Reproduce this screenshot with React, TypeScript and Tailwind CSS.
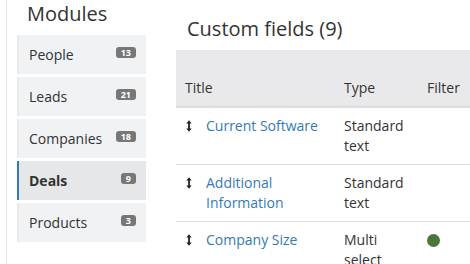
import React from "react";

const modules = [
  { name: "People", count: 13 },
  { name: "Leads", count: 21 },
  { name: "Companies", count: 18 },
  { name: "Deals", count: 9, active: true },
  { name: "Products", count: 3 },
];

const fields = [
  { title: ["Current Software"], type: ["Standard", "text"], filter: false },
  { title: ["Additional", "Information"], type: ["Standard", "text"], filter: false },
  { title: ["Company Size"], type: ["Multi", "select"], filter: true },
];

function SortIcon() {
  return (
    <svg width="6" height="12" viewBox="0 0 6 12" className="shrink-0">
      <path d="M3 2V10" stroke="#222" strokeWidth="1.8" />
      <path d="M0.3 3.4L3 0.3L5.7 3.4Z" fill="#222" />
      <path d="M0.3 8.6L3 11.7L5.7 8.6Z" fill="#222" />
    </svg>
  );
}

export default function App() {
  return (
    <div className="flex w-[470px] h-[264px] overflow-hidden bg-white text-[#333] font-['Open_Sans',sans-serif]">
      {/* left rule */}
      <div className="w-[7px] shrink-0 border-r border-[#e3e3e3]" />

      {/* Modules */}
      <div className="ml-[10px] w-[129px] shrink-0">
        <div className="pl-[10px] text-[20px] leading-[28px]">Modules</div>
        <div className="mt-[7px] flex flex-col gap-[3px]">
          {modules.map((m) => (
            <div
              key={m.name}
              className={
                m.active
                  ? "flex h-[39px] items-center justify-between border-l-2 border-[#337ab7] bg-[#e6e7e8] pl-[10px] pr-[10px] text-[14px] font-bold"
                  : "flex h-[39px] items-center justify-between border-l-2 border-[#eaebec] bg-[#f1f2f3] pl-[10px] pr-[10px] text-[14px]"
              }
            >
              <span>{m.name}</span>
              <span className="mb-[5px] rounded-[3px] bg-[#777] px-[5px] text-[9px] font-bold leading-[11px] text-white">
                {m.count}
              </span>
            </div>
          ))}
        </div>
      </div>

      {/* Custom fields */}
      <div className="ml-[30px] flex-1 min-w-0">
        <div className="mt-[15px] pl-[11px] text-[20px] leading-[28px]">Custom fields (9)</div>
        <div className="mt-[7px] w-[300px] text-[14px] leading-[20px]">
          <div className="flex border-b-2 border-[#dddddd] bg-[#e9e9eb] pt-[28px] pb-[8px]">
            <div className="w-[160px] pl-[9px]">Title</div>
            <div className="w-[83px] pl-[8px]">Type</div>
            <div className="pl-[8px]">Filter</div>
          </div>
          {fields.map((f, i) => (
            <div key={i} className="flex border-b border-[#dddddd] py-[8px]">
              <div className="flex w-[160px] pl-[10px]">
                <div className="flex h-[20px] items-center">
                  <SortIcon />
                </div>
                <div className="ml-[14px] text-[#337ab7]">
                  {f.title.map((t) => (
                    <div key={t}>{t}</div>
                  ))}
                </div>
              </div>
              <div className="w-[83px] pl-[8px]">
                {f.type.map((t) => (
                  <div key={t}>{t}</div>
                ))}
              </div>
              <div className="pl-[8px]">
                {f.filter && (
                  <div className="flex h-[20px] items-center">
                    <div className="h-[13px] w-[13px] rounded-full bg-[#4b763c]" />
                  </div>
                )}
              </div>
            </div>
          ))}
        </div>
      </div>
    </div>
  );
}
